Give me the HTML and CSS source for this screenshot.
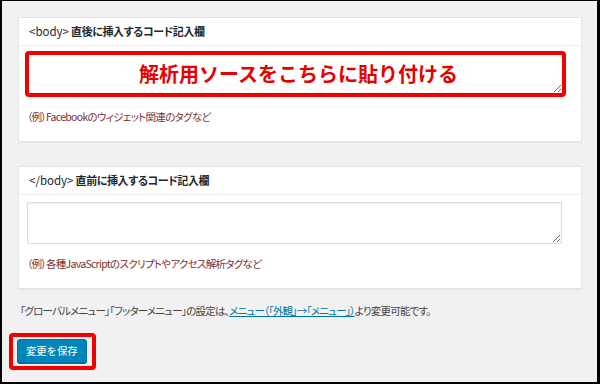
FILE: index.html
```html
<!DOCTYPE html>
<html lang="ja">
<head>
  <meta charset="UTF-8" />
  <meta name="viewport" content="width=device-width, initial-scale=1.0"/>
  <title>コード記入欄</title>
  <link rel="stylesheet" href="styles.css">
</head>
<body>
  <div class="screen">
    <div class="card">
      <h3 class="card-title"><span class="tag">&lt;body&gt;</span> 直後に挿入するコード記入欄</h3>
      <div class="card-body">
        <div class="mark mark-field">
          <textarea class="code-field"></textarea>
          <span class="mark-label">解析用ソースをこちらに貼り付ける</span>
        </div>
        <p class="note">（例）Facebookのウィジェット関連のタグなど</p>
      </div>
    </div>

    <div class="card">
      <h3 class="card-title"><span class="tag">&lt;/body&gt;</span> 直前に挿入するコード記入欄</h3>
      <div class="card-body">
        <textarea class="code-field plain"></textarea>
        <p class="note">（例）各種JavaScriptのスクリプトやアクセス解析タグなど</p>
      </div>
    </div>

    <p class="hint">「グローバルメニュー」「フッターメニュー」の設定は、<a href="#">メニュー（「外観」→「メニュー」）</a>より変更可能です。</p>

    <div class="mark mark-button">
      <button class="save">変更を保存</button>
    </div>
  </div>
</body>
</html>
```

FILE: styles.css
```css
* {
  box-sizing: border-box;
}

body {
  margin: 0;
  font-family: "Noto Sans CJK JP", "Noto Sans", sans-serif;
  background-color: #f1f1f1;
}

.screen {
  height: 384px;
  border-style: solid;
  border-color: #000;
  border-width: 1px 3px 2px 2px;
  padding: 16px 15px 0 16px;
  background-color: #f1f1f1;
  font-feature-settings: "palt";
  color: #444;
}

.card {
  background-color: #fff;
  border: 1px solid #e5e5e5;
  box-shadow: 0 1px 1px rgba(0, 0, 0, 0.04);
}

.card + .card {
  margin-top: 24px;
}

.card-title {
  margin: 0;
  height: 28px;
  padding: 0 10px;
  font-size: 11px;
  font-weight: 700;
  line-height: 27px;
  letter-spacing: -0.4px;
  color: #23282d;
  border-bottom: 1px solid #eee;
}

.tag {
  font-weight: 400;
  letter-spacing: 0;
  font-size: 11.5px;
}

.card-body {
  padding: 7px 19px 16px 8px;
}

.code-field {
  display: block;
  width: 100%;
  height: 42px;
  margin: 0;
  border: 1px solid #ddd;
  box-shadow: inset 0 1px 2px rgba(0, 0, 0, 0.07);
  background-color: #fff;
  resize: vertical;
  font: inherit;
}

/* red annotation boxes */
.mark {
  border: 4px solid #f20000;
  border-radius: 4px;
}

.mark-field {
  display: grid;
  height: 46px;
  margin: -2px -4px 0 -2px;
}

.mark-field .code-field,
.mark-field .mark-label {
  grid-area: 1 / 1;
}

.mark-field .code-field {
  height: 100%;
  border: none;
  box-shadow: none;
}

.mark-label {
  align-self: center;
  justify-self: center;
  margin-left: 6px;
  font-size: 20px;
  font-weight: 700;
  line-height: 1;
  color: #e60000;
  font-feature-settings: normal;
  pointer-events: none;
}

.note {
  margin: 12px 0 0;
  font-size: 10.5px;
  line-height: 16px;
  letter-spacing: -0.7px;
  color: #7d2f2f;
}

.hint {
  margin: 14px 0 0 2px;
  font-size: 10.5px;
  line-height: 16px;
  letter-spacing: -0.8px;
  color: #444;
}

.hint a {
  color: #0073aa;
}

.mark-button {
  display: inline-block;
  margin: 14px 0 0 -9px;
  padding: 2px 5px 3px 4px;
}

.save {
  display: block;
  height: 24px;
  padding: 0 8px 0 8px;
  font-family: inherit;
  font-size: 10.5px;
  line-height: 22px;
  letter-spacing: -0.2px;
  color: #fff;
  background-color: #0085ba;
  border: 1px solid #0073aa;
  border-radius: 3px;
  box-shadow: 0 1px 0 #006799;
  cursor: pointer;
}
```
